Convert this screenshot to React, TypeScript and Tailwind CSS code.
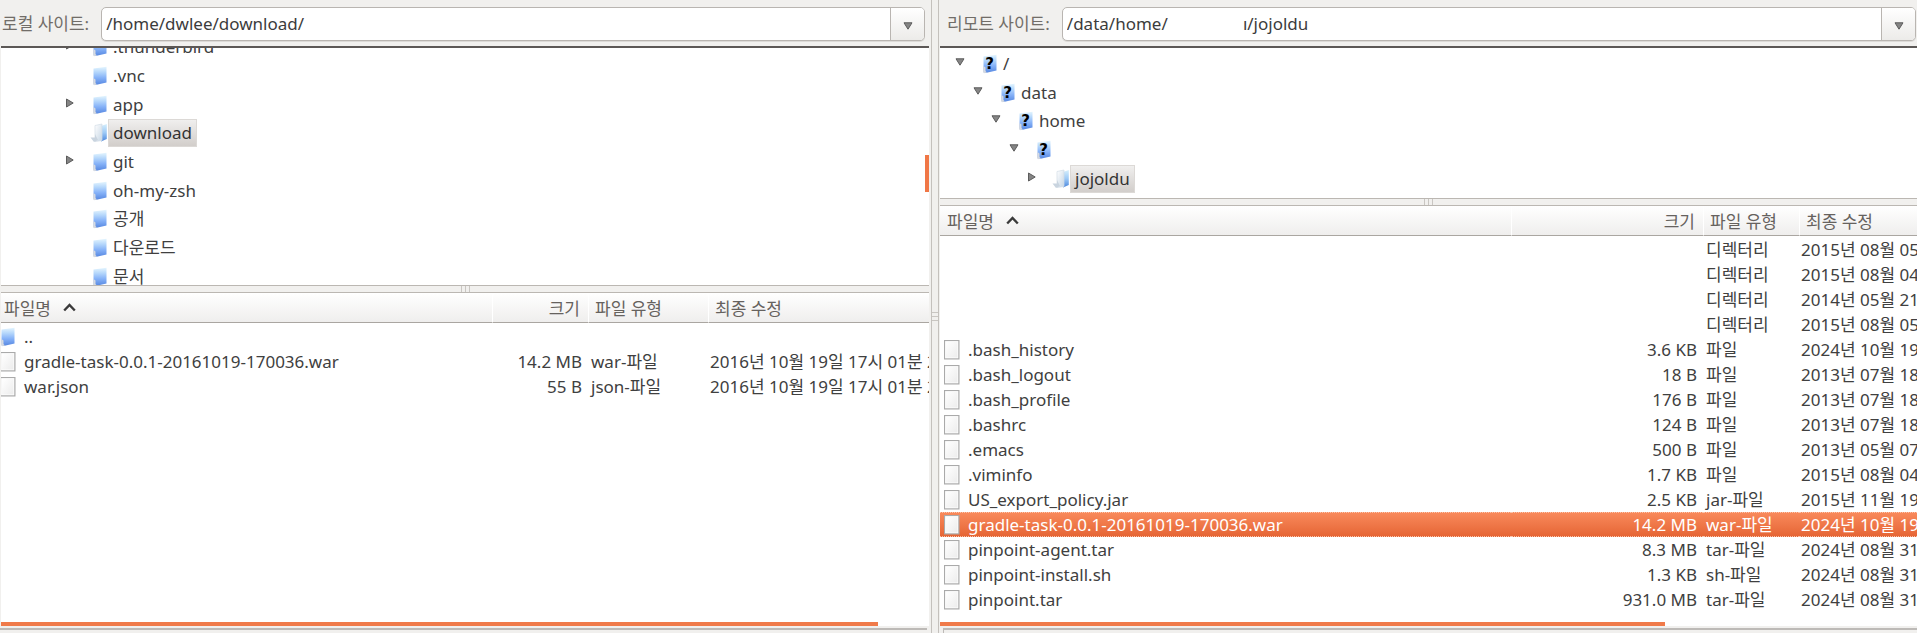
import React from "react";

type TreeNode = {
  name: string;
  depth: number;
  icon: "folder" | "open" | "unknown";
  arrow?: "right" | "down";
  selected?: boolean;
};

type FileRow = {
  name: string;
  size: string;
  type: string;
  date: string;
  icon?: "folder" | "file";
  selected?: boolean;
};

const localTree: TreeNode[] = [
  { name: ".thunderbird", depth: 0, icon: "folder", arrow: "right" },
  { name: ".vnc", depth: 0, icon: "folder" },
  { name: "app", depth: 0, icon: "folder", arrow: "right" },
  { name: "download", depth: 0, icon: "open", selected: true },
  { name: "git", depth: 0, icon: "folder", arrow: "right" },
  { name: "oh-my-zsh", depth: 0, icon: "folder" },
  { name: "공개", depth: 0, icon: "folder" },
  { name: "다운로드", depth: 0, icon: "folder" },
  { name: "문서", depth: 0, icon: "folder" },
];

const remoteTree: TreeNode[] = [
  { name: "/", depth: 0, icon: "unknown", arrow: "down" },
  { name: "data", depth: 1, icon: "unknown", arrow: "down" },
  { name: "home", depth: 2, icon: "unknown", arrow: "down" },
  { name: "", depth: 3, icon: "unknown", arrow: "down" },
  { name: "jojoldu", depth: 4, icon: "open", arrow: "right", selected: true },
];

const localFiles: FileRow[] = [
  { name: "..", size: "", type: "", date: "", icon: "folder" },
  { name: "gradle-task-0.0.1-20161019-170036.war", size: "14.2 MB", type: "war-파일", date: "2016년 10월 19일 17시 01분 2", icon: "file" },
  { name: "war.json", size: "55 B", type: "json-파일", date: "2016년 10월 19일 17시 01분 2", icon: "file" },
];

const remoteFiles: FileRow[] = [
  { name: "", size: "", type: "디렉터리", date: "2015년 08월 05" },
  { name: "", size: "", type: "디렉터리", date: "2015년 08월 04" },
  { name: "", size: "", type: "디렉터리", date: "2014년 05월 21" },
  { name: "", size: "", type: "디렉터리", date: "2015년 08월 05" },
  { name: ".bash_history", size: "3.6 KB", type: "파일", date: "2024년 10월 19", icon: "file" },
  { name: ".bash_logout", size: "18 B", type: "파일", date: "2013년 07월 18", icon: "file" },
  { name: ".bash_profile", size: "176 B", type: "파일", date: "2013년 07월 18", icon: "file" },
  { name: ".bashrc", size: "124 B", type: "파일", date: "2013년 07월 18", icon: "file" },
  { name: ".emacs", size: "500 B", type: "파일", date: "2013년 05월 07", icon: "file" },
  { name: ".viminfo", size: "1.7 KB", type: "파일", date: "2015년 08월 04", icon: "file" },
  { name: "US_export_policy.jar", size: "2.5 KB", type: "jar-파일", date: "2015년 11월 19", icon: "file" },
  { name: "gradle-task-0.0.1-20161019-170036.war", size: "14.2 MB", type: "war-파일", date: "2024년 10월 19", icon: "file", selected: true },
  { name: "pinpoint-agent.tar", size: "8.3 MB", type: "tar-파일", date: "2024년 08월 31", icon: "file" },
  { name: "pinpoint-install.sh", size: "1.3 KB", type: "sh-파일", date: "2024년 08월 31", icon: "file" },
  { name: "pinpoint.tar", size: "931.0 MB", type: "tar-파일", date: "2024년 08월 31", icon: "file" },
];

function FolderIcon({ unknown = false }: { unknown?: boolean }) {
  return (
    <svg width="16" height="20" viewBox="0 0 16 20" className="shrink-0" aria-hidden="true">
      <defs>
        <linearGradient id="folderBlue" x1="0" y1="0" x2="0" y2="1">
          <stop offset="0" stopColor="#e4f5fe" />
          <stop offset="0.3" stopColor="#b4d6fb" />
          <stop offset="0.6" stopColor="#86b2f8" />
          <stop offset="1" stopColor="#5586e0" />
        </linearGradient>
      </defs>
      <path d="M1.5 2.5 L14.5 0.8 V16.5 L3.5 19 L1.5 18 Z" fill="url(#folderBlue)" />
      <path d="M1.5 12 L3.5 13.5 V17 L5 18.6 L2 19.2 L1 18 Z" fill="#d5dae2" />
      {unknown && (
        <text x="7.5" y="15" textAnchor="middle" fontSize="15" fontWeight="700" fontFamily="DejaVu Sans, sans-serif" fill="#000">
          ?
        </text>
      )}
    </svg>
  );
}

function OpenFolderIcon() {
  return (
    <svg width="18" height="20" viewBox="0 0 18 20" className="shrink-0" aria-hidden="true">
      <defs>
        <linearGradient id="openBlue" x1="0" y1="0" x2="0" y2="1">
          <stop offset="0" stopColor="#d6effc" />
          <stop offset="0.5" stopColor="#9cc9f6" />
          <stop offset="1" stopColor="#4b86dc" />
        </linearGradient>
        <linearGradient id="openWhite" x1="0" y1="0" x2="1" y2="1">
          <stop offset="0" stopColor="#ffffff" />
          <stop offset="1" stopColor="#c5d5e4" />
        </linearGradient>
      </defs>
      <path d="M11 3 L16.8 1 V16 L11 18.5 Z" fill="url(#openBlue)" />
      <path d="M5 2.5 L12 1 V17.5 L5 18.5 Z" fill="url(#openWhite)" stroke="#d3dde6" strokeWidth="0.7" />
      <path d="M0.5 14.5 H5 V11 L8 17 L4 19 Z" fill="#c9d4df" />
    </svg>
  );
}

function FileIcon() {
  return (
    <svg width="16" height="20" viewBox="0 0 16 20" className="shrink-0" aria-hidden="true">
      <defs>
        <linearGradient id="paper" x1="0" y1="0" x2="1" y2="1">
          <stop offset="0" stopColor="#ffffff" />
          <stop offset="1" stopColor="#ececec" />
        </linearGradient>
      </defs>
      <rect x="0.5" y="0.5" width="14.4" height="18.4" fill="#fff" stroke="#aaaaaa" strokeWidth="1.2" />
      <rect x="2" y="2" width="11.5" height="15.5" fill="url(#paper)" />
    </svg>
  );
}

function Expander({ dir }: { dir: "right" | "down" }) {
  return (
    <svg width="10" height="10" viewBox="0 0 10 10" aria-hidden="true">
      <path
        d={dir === "right" ? "M1.5 1 V9 L8.2 5 Z" : "M1 1.8 H9 L5 8.2 Z"}
        fill="#858585"
        stroke="#5c5c5c"
        strokeWidth="1"
        strokeLinejoin="round"
      />
    </svg>
  );
}

const indents = ["pl-0", "pl-[18px]", "pl-9", "pl-[54px]", "pl-[72px]"];

function Tree({ nodes, label, className }: { nodes: TreeNode[]; label: string; className: string }) {
  return (
    <ul aria-label={label} className={`flex flex-col ${className}`}>
      {nodes.map((node, i) => (
        <li key={i} className={`flex min-h-0 flex-1 items-center ${indents[node.depth]}`}>
          <span className="flex w-[26px] shrink-0 items-center">
            {node.arrow && (
              <button type="button" aria-label={`${label} ${i + 1}`} className="mb-1">
                <Expander dir={node.arrow} />
              </button>
            )}
          </span>
          <span className="flex w-[17px] shrink-0 justify-end">
            {node.icon === "open" ? <OpenFolderIcon /> : <FolderIcon unknown={node.icon === "unknown"} />}
          </span>
          <span
            className={
              node.selected
                ? "flex h-7 items-center border border-[#dcd9d6] bg-linear-to-b from-[#f0efee] to-[#d2cecb] px-1 text-[#333]"
                : "flex h-7 items-center px-[5px]"
            }
          >
            {node.name}
          </span>
        </li>
      ))}
    </ul>
  );
}

function SiteBar({ id, label, value, className }: { id: string; label: string; value: string; className: string }) {
  return (
    <div className={`flex h-[46px] shrink-0 items-center gap-3 pt-[2px] ${className}`}>
      <label htmlFor={id} className="shrink-0 text-[#716d68]">
        {label}
      </label>
      <div className="flex h-[34px] min-w-0 flex-1 overflow-hidden rounded-[5px] border border-[#b9b5b1] bg-white shadow-[0_1px_0_#dcdad7]">
        <input id={id} type="text" defaultValue={value} className="min-w-0 flex-1 bg-transparent px-1 text-[#3c3c3c] outline-none" />
        <button
          type="button"
          aria-label={`${label} 목록`}
          className="flex w-[34px] items-center justify-center border-l border-[#b9b5b1] bg-linear-to-b from-white to-[#ecebe9] pt-1"
        >
          <Expander dir="down" />
        </button>
      </div>
    </div>
  );
}

function FileTable({ rows, cols, padHead, padName }: { rows: FileRow[]; cols: string[]; padHead: string; padName: string }) {
  const head = "flex h-[30px] items-center border-b border-[#aaa6a1] bg-linear-to-b from-white to-[#efeeed] pt-[3px] whitespace-nowrap";
  return (
    <table className="w-full table-fixed border-separate border-spacing-0">
      <colgroup>
        <col />
        <col className={cols[0]} />
        <col className={cols[1]} />
        <col className={cols[2]} />
      </colgroup>
      <thead>
        <tr className="text-left text-[#66625e]">
          <th scope="col" aria-sort="ascending" className="p-0 pb-px font-normal">
            <div className={`${head} ${padHead} gap-3`}>
              파일명
              <svg width="13" height="9" viewBox="0 0 13 9" className="mb-1" aria-hidden="true">
                <path d="M1.2 7.5 L6.5 2 L11.8 7.5" fill="none" stroke="#3a3a3a" strokeWidth="2.4" />
              </svg>
            </div>
          </th>
          <th scope="col" className="p-0 pb-px font-normal">
            <div className={`${head} justify-end border-l border-l-white pr-2`}>크기</div>
          </th>
          <th scope="col" className="p-0 pb-px font-normal">
            <div className={`${head} border-l border-l-white pl-[6px]`}>파일 유형</div>
          </th>
          <th scope="col" className="p-0 pb-px font-normal">
            <div className={`${head} border-l border-l-white pl-[6px]`}>최종 수정</div>
          </th>
        </tr>
      </thead>
      <tbody>
        {rows.map((row, i) => (
          <tr
            key={i}
            className={
              row.selected
                ? "h-[25px] bg-linear-to-b from-[#f98a5c] to-[#e56433] text-white [&>td]:border-y [&>td]:border-dotted [&>td]:border-[#fbc3aa]"
                : "h-[25px]"
            }
          >
            <td className="overflow-hidden p-0">
              <div className={`flex h-[23px] items-center gap-2 whitespace-nowrap ${padName}`}>
                {row.icon === "file" && <FileIcon />}
                {row.icon === "folder" && <FolderIcon />}
                {row.name}
              </div>
            </td>
            <td className="overflow-hidden p-0 pr-[6px] text-right whitespace-nowrap">{row.size}</td>
            <td className="overflow-hidden p-0 pl-[3px] whitespace-nowrap">{row.type}</td>
            <td className="overflow-hidden p-0 pl-[2px] whitespace-nowrap">{row.date}</td>
          </tr>
        ))}
      </tbody>
    </table>
  );
}

function Grip({ className }: { className: string }) {
  return (
    <div className={`flex items-center justify-center gap-[3px] ${className}`}>
      <i className="min-h-px min-w-px self-stretch bg-[#c9c6c2]" />
      <i className="min-h-px min-w-px self-stretch bg-[#c9c6c2]" />
      <i className="min-h-px min-w-px self-stretch bg-[#c9c6c2]" />
    </div>
  );
}

export default function App() {
  return (
    <main className="grid h-screen min-h-[480px] grid-cols-[minmax(0,932fr)_6px_minmax(0,979fr)] overflow-hidden bg-[#f1f0ee] font-['Noto_Sans','Noto_Sans_CJK_KR',sans-serif] text-[17px] leading-5 text-[#404040]">
      <section aria-label="로컬" className="flex min-w-0 flex-col border-r border-[#c4c1bd]">
        <SiteBar id="local-site" label="로컬 사이트:" value="/home/dwlee/download/" className="pr-[6px] pl-[2px]" />
        <div className="relative mr-[2px] ml-px h-60 shrink-0 overflow-hidden border-t-2 border-b border-t-[#5c5856] border-b-[#bbb7b2] bg-white">
          <Tree nodes={localTree} label="로컬 폴더" className="-mt-[15px] h-[258px] pl-16" />
          <div className="absolute top-[107px] right-0 h-[37px] w-1 bg-[#f07746]" />
        </div>
        <Grip className="h-[6px] shrink-0" />
        <div className="mr-[2px] ml-px flex min-h-0 flex-1 flex-col border-t border-[#bbb7b2] bg-white">
          <div className="min-h-0 flex-1 overflow-hidden">
            <FileTable rows={localFiles} cols={["w-24", "w-[120px]", "w-[221px]"]} padHead="pl-[3px]" padName="pl-0 -ml-px" />
          </div>
          <div className="grid h-1 shrink-0 grid-cols-[877fr_51fr]">
            <div className="bg-[#f07a49]" />
          </div>
        </div>
        <div className="mt-[2px] mr-1 h-[5px] shrink-0 border-t-2 border-[#bdbab7]" />
      </section>

      <Grip className="flex-col" />

      <section aria-label="리모트" className="flex min-w-0 flex-col border-l border-[#c4c1bd]">
        <SiteBar
          id="remote-site"
          label="리모트 사이트:"
          value={"/data/home/" + "\u00a0".repeat(17) + "ı/jojoldu"}
          className="pr-px pl-2"
        />
        <div className="ml-px h-[153px] shrink-0 overflow-hidden border-t-2 border-b border-t-[#5c5856] border-b-[#bbb7b2] bg-white">
          <Tree nodes={remoteTree} label="리모트 폴더" className="mt-[2px] h-[143px] pl-[15px]" />
        </div>
        <Grip className="h-[6px] shrink-0" />
        <div className="ml-px flex min-h-0 flex-1 flex-col border-t border-[#bbb7b2] bg-white">
          <div className="min-h-0 flex-1 overflow-hidden">
            <FileTable rows={remoteFiles} cols={["w-48", "w-24", "w-[118px]"]} padHead="pl-[7px]" padName="pl-1" />
          </div>
          <div className="grid h-1 shrink-0 grid-cols-[725fr_252fr]">
            <div className="bg-[#f07a49]" />
          </div>
        </div>
        <div className="mt-[2px] ml-1 h-[5px] shrink-0 border-t-2 border-l border-[#bdbab7]" />
      </section>
    </main>
  );
}
